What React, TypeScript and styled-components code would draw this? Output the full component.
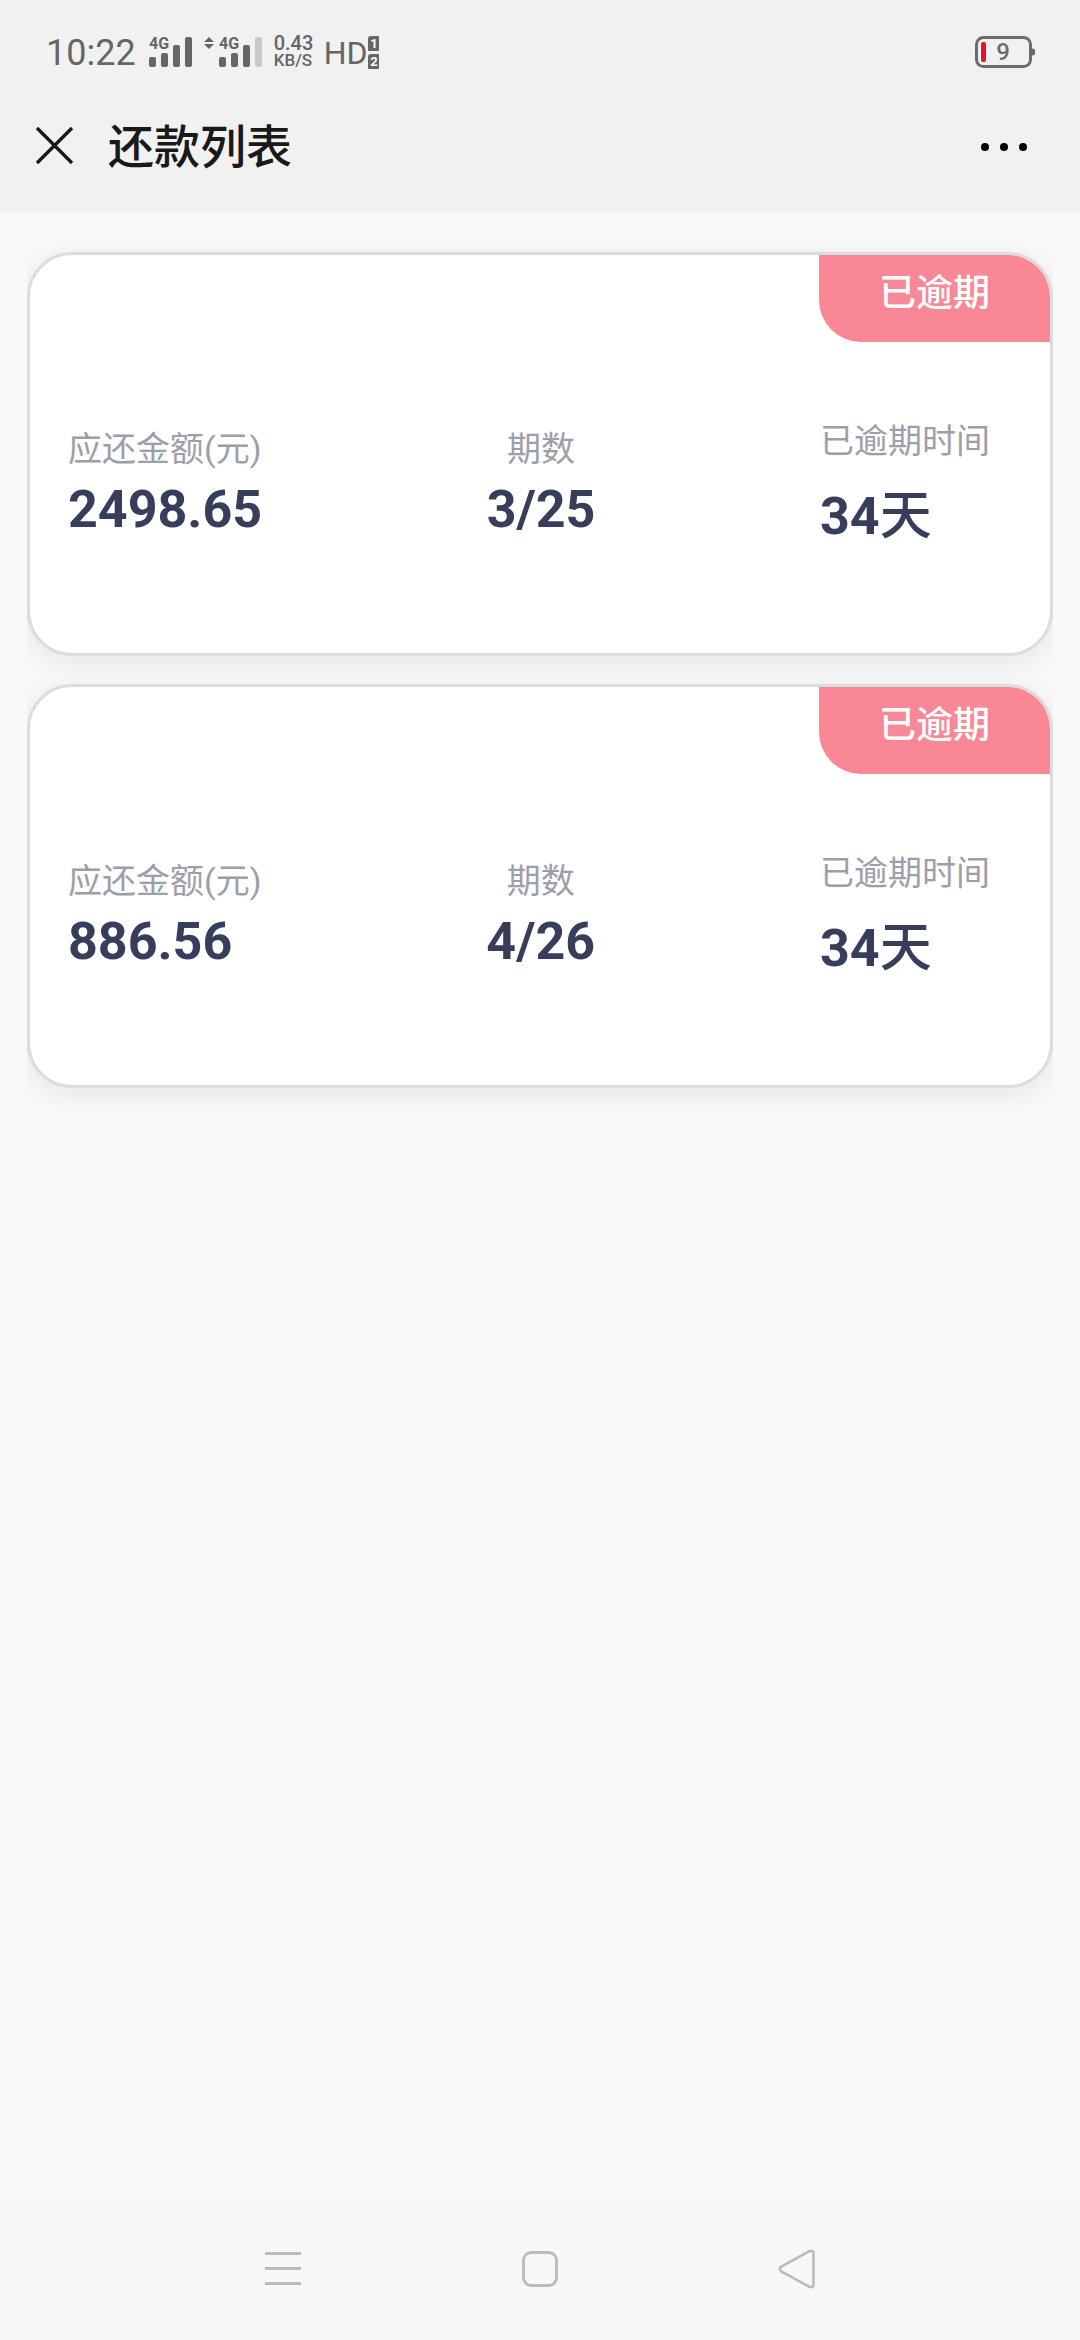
import React from "react";
import styled, { createGlobalStyle } from "styled-components";

const GlobalStyle = createGlobalStyle`
  * { box-sizing: border-box; }
  body {
    margin: 0;
    background: #f8f8f8;
    font-family: Roboto, "Noto Sans CJK SC", sans-serif;
  }
  button {
    padding: 0;
    border: 0;
    background: none;
    font: inherit;
    color: inherit;
    cursor: pointer;
  }
  svg { display: block; }
`;

const Page = styled.div`
  min-height: 100vh;
  display: flex;
  flex-direction: column;
`;

const Top = styled.header`
  background: #f1f1f1;
  border-bottom: 1px solid #eeeeee;
`;

const StatusBar = styled.div`
  height: 84px;
  padding: 20px 45px 0 46px;
  display: flex;
  align-items: center;
  justify-content: space-between;
  color: #666;
`;

const StatusGroup = styled.div`
  display: flex;
  align-items: center;
`;

const Clock = styled.time`
  padding-top: 2px;
  font-size: 36px;
  line-height: 40px;
  margin-right: 13px;
`;

const Signal = styled.svg`
  margin-right: 11px;
`;

const Traffic = styled.svg`
  margin-right: 5px;
`;

const Speed = styled.div`
  width: 42px;
  margin-right: 8px;
  display: flex;
  flex-direction: column;
  font-weight: 500;
  font-size: 20px;
  line-height: 17px;
`;

const SpeedUnit = styled.span`
  font-size: 17px;
`;

const Hd = styled.span`
  padding-top: 2px;
  font-size: 32px;
  line-height: 40px;
  margin-right: 1px;
`;

const Sims = styled.div`
  display: flex;
  flex-direction: column;
  gap: 3px;
`;

const Sim = styled.span`
  width: 11px;
  height: 15px;
  border-radius: 3px 1px 1px 1px;
  background: #666;
  color: #fff;
  font-size: 13px;
  font-weight: 700;
  line-height: 15px;
  text-align: center;
`;

const TitleBar = styled.div`
  height: 126px;
  padding: 0 48px 0 34px;
  display: flex;
  align-items: center;
  color: #191919;
`;

const Title = styled.h1`
  flex: 1;
  margin: 0 0 0 32px;
  font-size: 46px;
  font-weight: 500;
  line-height: 66px;
`;

const List = styled.main`
  flex: 1;
  margin: 0 27px;
  padding: 41px 0;
  overflow: hidden;
  display: flex;
  flex-direction: column;
  gap: 28px;
`;

const Card = styled.article`
  position: relative;
  min-height: 404px;
  padding: 54px 60px 0 38px;
  display: flex;
  align-items: center;
  justify-content: space-between;
  background: #fff;
  border: 3px solid #dcdcde;
  border-radius: 45px;
  box-shadow: 0 6px 24px rgba(30, 30, 60, 0.08);
`;

const Tag = styled.span`
  position: absolute;
  top: 0;
  right: 0;
  width: 231px;
  height: 87px;
  border-radius: 0 42px 0 42px;
  background: #fa8795;
  color: #fff;
  font-size: 37px;
  font-weight: 500;
  line-height: 78px;
  text-align: center;
`;

const Field = styled.div<{ $gap: number; $center?: boolean }>`
  display: flex;
  flex-direction: column;
  align-items: ${(p) => (p.$center ? "center" : "flex-start")};
  gap: ${(p) => p.$gap}px;
`;

const Label = styled.div`
  color: #9e9ea9;
  font-size: 34px;
`;

const Value = styled.div`
  color: #363e5c;
  font-size: 52px;
  font-weight: 700;
`;

const Unit = styled.span`
  font-weight: 500;
`;

const NavBar = styled.nav`
  height: 143px;
  padding: 0 154px;
  display: grid;
  grid-template-columns: repeat(3, 1fr);
  background: #f7f7f7;
`;

const NavButton = styled.button`
  display: flex;
  align-items: center;
  justify-content: center;
`;

function SignalIcon({ weak }: { weak?: boolean }) {
  return (
    <Signal width="44" height="44" viewBox="0 -6 44 44" fill="#666" aria-hidden="true">
      <text x="0" y="13" fontSize="16" fontWeight="700">4G</text>
      <rect x="0" y="21" width="7" height="10" rx="2" />
      <rect x="12" y="17" width="7" height="14" rx="2" />
      <rect x="24" y="9" width="7" height="22" rx="2" />
      <rect x="36" y="1" width="7" height="30" rx="2" fill={weak ? "#c8c8c8" : "#666"} />
    </Signal>
  );
}

const records = [
  { amount: "2498.65", period: "3/25", overdueDays: 34 },
  { amount: "886.56", period: "4/26", overdueDays: 34 },
];

export default function App() {
  return (
    <Page>
      <GlobalStyle />
      <Top>
        <StatusBar>
          <StatusGroup>
            <Clock>10:22</Clock>
            <SignalIcon />
            <Traffic width="10" height="32" viewBox="0 0 10 32" fill="#666" aria-hidden="true">
              <path d="M5 1 10 6H0zM5 13 0 8h10z" />
            </Traffic>
            <SignalIcon weak />
            <Speed>
              <span>0.43</span>
              <SpeedUnit>KB/S</SpeedUnit>
            </Speed>
            <Hd>HD</Hd>
            <Sims>
              <Sim>1</Sim>
              <Sim>2</Sim>
            </Sims>
          </StatusGroup>
          <svg width="60" height="32" viewBox="0 0 60 32" fill="#6b6b6b" role="img" aria-label="电量 9%">
            <rect x="1.5" y="1.5" width="54" height="29" rx="7" fill="none" stroke="#6b6b6b" strokeWidth="3" />
            <path d="M57 12.5a3.5 3.5 0 0 1 0 7z" />
            <rect x="6" y="6" width="5" height="20" rx="2" fill="#e8112d" />
            <text x="28" y="24" fontSize="24" fontWeight="500" textAnchor="middle">9</text>
          </svg>
        </StatusBar>
        <TitleBar>
          <button aria-label="关闭">
            <svg width="42" height="42" viewBox="0 0 42 42" stroke="#191919" strokeWidth="3.4" aria-hidden="true">
              <path d="M3 2 38 37M38 2 3 37" />
            </svg>
          </button>
          <Title>还款列表</Title>
          <button aria-label="更多">
            <svg width="56" height="42" viewBox="0 0 56 42" aria-hidden="true">
              <circle cx="9" cy="21" r="4" />
              <circle cx="28" cy="21" r="4" />
              <circle cx="47" cy="21" r="4" />
            </svg>
          </button>
        </TitleBar>
      </Top>
      <List>
        {records.map((r) => (
          <Card key={r.amount}>
            <Tag>已逾期</Tag>
            <Field $gap={8}>
              <Label>应还金额(元)</Label>
              <Value>{r.amount}</Value>
            </Field>
            <Field $gap={8} $center>
              <Label>期数</Label>
              <Value>{r.period}</Value>
            </Field>
            <Field $gap={11}>
              <Label>已逾期时间</Label>
              <Value>
                {r.overdueDays}
                <Unit>天</Unit>
              </Value>
            </Field>
          </Card>
        ))}
      </List>
      <NavBar>
        <NavButton aria-label="最近任务">
          <svg width="36" height="40" viewBox="0 0 36 40" fill="#bbb" aria-hidden="true">
            <path d="M0 3h36v3H0zM0 18h36v3H0zM0 33h36v3H0z" />
          </svg>
        </NavButton>
        <NavButton aria-label="主屏幕">
          <svg width="36" height="36" viewBox="0 0 36 36" fill="none" stroke="#bbb" strokeWidth="2.8" aria-hidden="true">
            <rect x="1.5" y="1.5" width="33" height="33" rx="8" />
          </svg>
        </NavButton>
        <NavButton aria-label="返回">
          <svg width="38" height="40" viewBox="0 0 38 40" fill="none" stroke="#bbb" strokeWidth="2.6" strokeLinejoin="round" aria-hidden="true">
            <path d="M31.5 2.2 3.2 17.6Q.8 20 3.2 22.4L31.5 37.8Q35.5 39 35.5 35.5V4.5Q35.5 1 31.5 2.2Z" />
          </svg>
        </NavButton>
      </NavBar>
    </Page>
  );
}
